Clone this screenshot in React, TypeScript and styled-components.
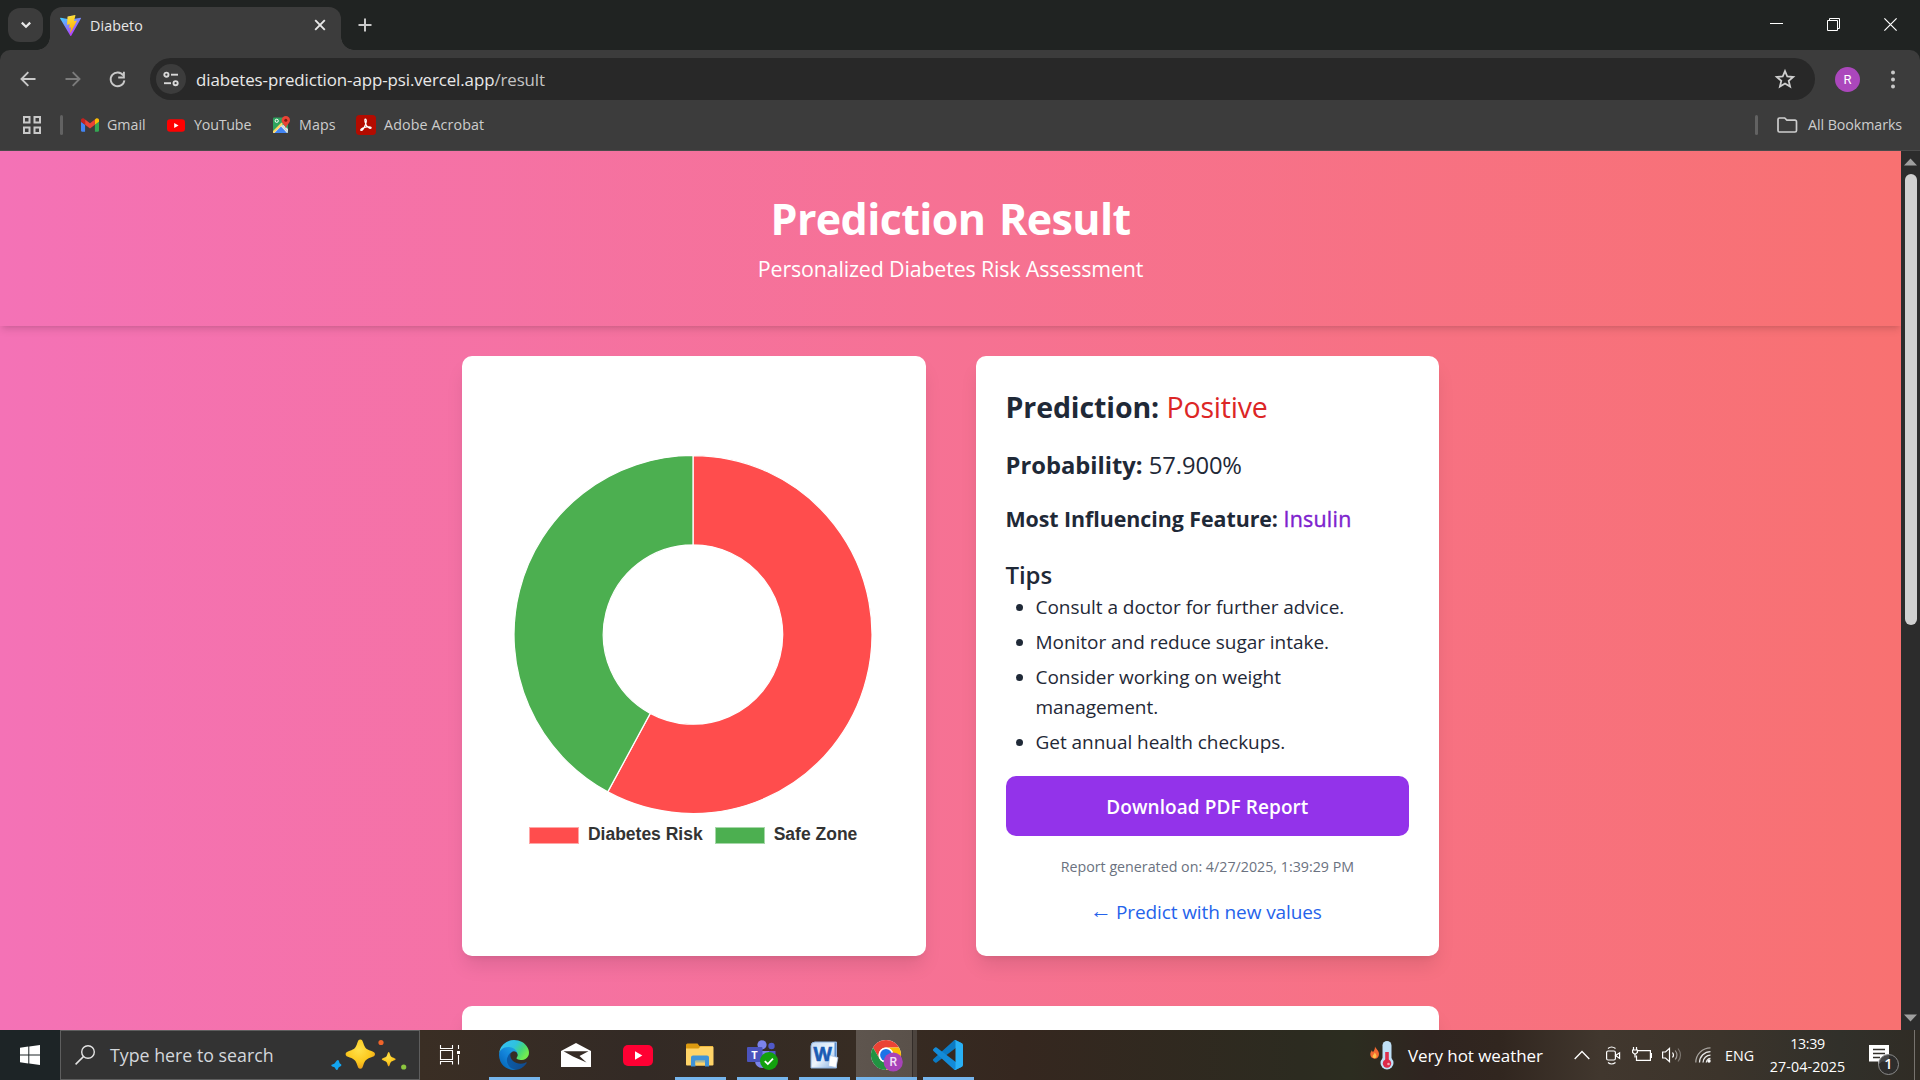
import React from 'react';
import styled, { createGlobalStyle, css } from 'styled-components';

const GlobalStyle = createGlobalStyle`
  *, *::before, *::after { box-sizing: border-box; }
  body { margin: 0; overflow: hidden; background: #202322; }
  svg { display: block; flex: none; overflow: visible; }
`;

const uiFont = css`
  font-family: 'Open Sans', 'Noto Sans', sans-serif;
  font-variant-ligatures: none;
  white-space: nowrap;
`;

const Screen = styled.div`
  ${uiFont}
  width: 1920px;
  height: 1080px;
  display: grid;
  grid-template-rows: 50px 101px 879px 50px;
  overflow: hidden;
`;

/* ---------- Browser tab strip ---------- */

const TabStrip = styled.header`
  display: flex;
  align-items: flex-end;
  background: #202322;
  padding-left: 8px;
`;

const TabSearch = styled.button`
  width: 35px;
  height: 34px;
  margin: 0 0 8px;
  padding: 0;
  border: 0;
  border-radius: 12px;
  background: #3c3c3c;
  display: grid;
  place-items: center;
`;

const Tab = styled.div`
  width: 291px;
  height: 43px;
  margin-left: 7px;
  padding: 0 15px 7px 10px;
  border-radius: 12px 12px 0 0;
  background: #3c3c3c;
  display: flex;
  align-items: center;
  gap: 9px;
  color: #e8e8e8;
  font-size: 14.25px;
  letter-spacing: 0.1px;
  position: relative;

  &::before,
  &::after {
    content: '';
    position: absolute;
    bottom: 0;
    width: 13px;
    height: 13px;
  }
  &::before {
    left: -13px;
    background: radial-gradient(circle at 0 0, transparent 12.5px, #3c3c3c 13px);
  }
  &::after {
    right: -13px;
    background: radial-gradient(circle at 100% 0, transparent 12.5px, #3c3c3c 13px);
  }
`;

const TabTitle = styled.span`
  flex: 1;
  padding-top: 1px;
`;

const NewTab = styled.div`
  width: 48px;
  height: 43px;
  padding-bottom: 7px;
  display: grid;
  place-items: center;
`;

const WindowControls = styled.div`
  margin-left: auto;
  height: 50px;
  display: flex;
`;

const WindowControl = styled.div`
  width: 57px;
  height: 49px;
  padding-right: 2px;
  display: grid;
  place-items: center;
`;

/* ---------- Toolbar and bookmarks ---------- */

const BrowserBars = styled.div`
  background: #202322;
`;

const BarsSurface = styled.div`
  height: 101px;
  background: #3c3c3c;
  border-radius: 10px 10px 0 0;
  border-bottom: 1px solid #4b4b4b;
`;

const Toolbar = styled.div`
  height: 58px;
  padding-left: 5px;
  display: flex;
  align-items: center;
`;

const NavButton = styled.div`
  width: 45px;
  height: 45px;
  display: grid;
  place-items: center;
`;

const Omnibox = styled.div`
  width: 1665px;
  height: 42px;
  margin-left: 10px;
  padding: 0 20px 0 6px;
  border-radius: 21px;
  background: #282828;
  display: flex;
  align-items: center;
  color: #e9e9e9;
  font-size: 16.9px;
  letter-spacing: -0.1px;
`;

const SiteInfo = styled.span`
  width: 30px;
  height: 30px;
  margin-right: 10px;
  border-radius: 50%;
  background: #3c3c3c;
  display: grid;
  place-items: center;
`;

const UrlText = styled.span`
  flex: 1;
  padding-top: 1px;
`;

const UrlPath = styled.span`
  color: #c4c4c4;
`;

const Avatar = styled.span`
  width: 25px;
  height: 25px;
  margin-left: 20px;
  border-radius: 50%;
  background: #ab47bc;
  color: #fff;
  display: grid;
  place-items: center;
  font: 400 13px/1 Roboto, sans-serif;
`;

const MenuDots = styled.span`
  margin-left: 31px;
`;

const BookmarksBar = styled.div`
  height: 34px;
  padding: 0 18px 0 23px;
  display: flex;
  align-items: center;
  color: #cdcdcd;
  font-size: 14.25px;
`;

const BookmarkLabel = styled.span`
  padding-bottom: 2px;
`;

const BarDivider = styled.i<{ $left: number; $right: number }>`
  width: 3px;
  height: 20px;
  border-radius: 2px;
  background: #626262;
  margin: 0 ${p => p.$right}px 0 ${p => p.$left}px;
`;

const Bookmark = styled.span<{ $width: number; $spacing?: number; $gap?: number }>`
  width: ${p => p.$width}px;
  display: flex;
  align-items: center;
  gap: ${p => p.$gap ?? 8}px;
  letter-spacing: ${p => p.$spacing ?? 0}px;
`;

const AllBookmarks = styled.span`
  margin-left: auto;
  display: flex;
  align-items: center;
  letter-spacing: -0.08px;
`;

/* ---------- Page ---------- */

const Viewport = styled.div`
  display: grid;
  grid-template-columns: 1901px 19px;
  overflow: hidden;
`;

const Page = styled.main`
  background: linear-gradient(to right, #f472b6, #f87171);
  overflow: hidden;
`;

const Hero = styled.section`
  height: 175px;
  padding-top: 40px;
  color: #fff;
  text-align: center;
  background: linear-gradient(to right, #f472b6, #f87171);
  box-shadow: 0 5px 7.5px -1.25px rgba(0, 0, 0, 0.1), 0 2.5px 5px -2.5px rgba(0, 0, 0, 0.1);
`;

const HeroTitle = styled.h1`
  margin: 0;
  font-size: 43px;
  font-weight: 700;
  line-height: 56px;
  letter-spacing: -0.62px;
  word-spacing: 3px;
`;

const HeroSubtitle = styled.p`
  margin: 4px 0 0;
  font-size: 21.4px;
  line-height: 35px;
  letter-spacing: -0.15px;
`;

const Content = styled.div`
  width: 977.5px;
  margin: 30px auto 0;
  display: grid;
  grid-template-columns: 1fr 1fr;
  gap: 50px;
`;

const Card = styled.section`
  height: 600px;
  padding: 30px;
  border-radius: 10px;
  background: #fff;
  box-shadow: 0 12.5px 18.75px -3.75px rgba(0, 0, 0, 0.1), 0 5px 7.5px -5px rgba(0, 0, 0, 0.1);
`;

const ChartCard = styled(Card)`
  display: flex;
  flex-direction: column;
  align-items: center;
  padding: 99px 31px 0 30px;
`;

const WideCard = styled(Card)`
  grid-column: 1 / -1;
`;

const Legend = styled.div`
  margin-top: 6px;
  display: flex;
  align-items: center;
  gap: 12px;
  font: 700 17.5px/27px 'Liberation Sans', Arial, sans-serif;
  color: #333;
`;

const LegendItem = styled.span`
  display: flex;
  align-items: center;
  gap: 9px;
`;

const LegendSwatch = styled.i<{ $color: string }>`
  width: 50px;
  height: 17px;
  margin-top: 1px;
  background: ${p => p.$color};
  border: 1px solid rgba(255, 255, 255, 0.5);
`;

const ResultCard = styled(Card)`
  color: #1f2937;
`;

const Fact = styled.p<{ $size: number; $line: number; $after: number; $spacing?: number }>`
  margin: 0 0 ${p => p.$after}px;
  font-size: ${p => p.$size}px;
  line-height: ${p => p.$line}px;
  letter-spacing: ${p => p.$spacing ?? 0}px;
`;

const Value = styled.span<{ $color?: string; $spacing?: number; $stroke?: number }>`
  color: ${p => p.$color ?? 'inherit'};
  letter-spacing: ${p => p.$spacing ?? 0}px;
  -webkit-text-stroke: ${p => p.$stroke ?? 0}px currentColor;
`;

const TipsTitle = styled.h2`
  margin: 0;
  font-size: 24px;
  line-height: 37px;
  font-weight: 600;
  letter-spacing: -0.1px;
`;

const TipList = styled.ul`
  margin: -1px 0 0;
  padding: 0 20px 0 30px;
  list-style: disc;
  font-size: 19px;
  line-height: 30px;
  letter-spacing: -0.04px;
  white-space: normal;
`;

const Tip = styled.li`
  & + & {
    margin-top: 5px;
  }
`;

const DownloadButton = styled.button`
  ${uiFont}
  display: block;
  width: 100%;
  height: 60px;
  margin: 19px 0 0;
  padding: 2px 0 0;
  border: 0;
  border-radius: 10px;
  background: #9333ea;
  color: #fff;
  font-size: 19px;
  font-weight: 600;
  letter-spacing: 0.08px;
`;

const Stamp = styled.p`
  margin: 20px 0 0;
  text-align: center;
  color: #6b7280;
  font-size: 14.25px;
  line-height: 21px;
`;

const BackLink = styled.a`
  margin-top: 19px;
  display: flex;
  justify-content: center;
  gap: 4px;
  color: #2563eb;
  font-size: 19px;
  line-height: 32px;
  letter-spacing: -0.1px;
`;

const Arrow = styled.span`
  font: 22px/30px 'Liberation Sans', sans-serif;
  margin-left: -3px;
`;

const Scrollbar = styled.div`
  background: #2c2c2c;
  display: flex;
  flex-direction: column;
  align-items: center;
  padding: 7px 0 8px;
`;

const Thumb = styled.div`
  width: 12px;
  height: 451px;
  margin: 8px 0 auto;
  border-radius: 6px;
  background: #d0d0d0;
`;

/* ---------- Taskbar ---------- */

const Taskbar = styled.footer`
  display: flex;
  color: #fff;
  background: linear-gradient(
    to right,
    #1d2426 0, #1d2426 60px, #3a2e24 420px, #332a25 640px, #372c23 860px, #35271f 1020px,
    #2c2b20 1300px, #2c2d20 1350px, #2f2420 1430px, #31261f 1500px, #41372e 1600px,
    #3c342b 1720px, #31302a 1840px, #302c25 1920px
  );
`;

const StartButton = styled.div`
  width: 60px;
  display: grid;
  place-items: center;
`;

const SearchBox = styled.div`
  width: 360px;
  padding: 0 13px 0 14px;
  border: 1px solid #5e5e5e;
  background: #333;
  display: flex;
  align-items: center;
  color: #d3d7dc;
  font-size: 17.8px;
`;

const SearchLabel = styled.span`
  flex: 1;
  padding-left: 15px;
`;

const TaskCell = styled.div<{ $active?: boolean; $first?: boolean }>`
  width: 62px;
  margin-right: ${p => (p.$first ? 1 : 0)}px;
  display: flex;
  flex-direction: column;
  align-items: center;
  background: ${p =>
    p.$active
      ? 'linear-gradient(to right, transparent 1px, #5e554e 1px, #5a514a 57px, #332c28 57px, #332c28 58px, #4c443e 58px)'
      : 'none'};
`;

const TaskIcon = styled.div`
  width: 34px;
  flex: 1;
  margin-top: 3px;
  display: grid;
  place-items: center;
`;

const RunningMark = styled.i<{ $state?: 'open' | 'active' }>`
  height: 3px;
  width: ${p => (p.$state === 'active' ? 61 : 51)}px;
  background: ${p => (p.$state ? '#76b5ec' : 'transparent')};
`;

const Weather = styled.div`
  width: 204px;
  margin-left: auto;
  display: flex;
  align-items: center;
  gap: 13px;
  font-size: 17px;
  letter-spacing: -0.06px;
`;

const Tray = styled.div`
  display: flex;
  align-items: center;
`;

const TrayIcon = styled.span<{ $width: number }>`
  width: ${p => p.$width}px;
  display: flex;
`;

const Language = styled.span`
  width: 44px;
  margin-left: -1px;
  font-size: 14.25px;
`;

const Clock = styled.div`
  width: 77px;
  text-align: center;
  font-size: 14.25px;
  line-height: 23px;
`;

const ClockTime = styled.div`
  letter-spacing: -0.35px;
`;

const ClockDate = styled.div`
  letter-spacing: 0.1px;
`;

const Notifications = styled.div`
  width: 51px;
  height: 50px;
  margin-left: 18px;
  padding: 15px 0 0 5px;
  border-right: 1px solid #77736e;
  position: relative;
`;

const NotificationCount = styled.span`
  position: absolute;
  left: 14px;
  top: 24px;
  width: 21px;
  height: 21px;
  border: 1px solid #8b8b8b;
  border-radius: 50%;
  background: rgba(45, 45, 45, 0.88);
  font-size: 14.5px;
  font-weight: 600;
  line-height: 18px;
  text-align: center;
`;

/* ---------- Icons ---------- */

const ViteLogo = () => (
  <svg width="21" height="21" viewBox="0 0 32 32">
    <defs>
      <linearGradient id="va" x1="0" y1="0" x2="0.6" y2="1">
        <stop stopColor="#41d1ff" />
        <stop offset="1" stopColor="#bd34fe" />
      </linearGradient>
      <linearGradient id="vb" x1="0.4" y1="0" x2="0.6" y2="1">
        <stop stopColor="#ffea83" />
        <stop offset="0.1" stopColor="#ffdd35" />
        <stop offset="1" stopColor="#ffa800" />
      </linearGradient>
    </defs>
    <path fill="url(#va)" d="M31.9 5.5 17.1 31.6a.8.8 0 0 1-1.4 0L.2 5.5a.8.8 0 0 1 .9-1.2l15 2.7h.3l14.8-2.7a.8.8 0 0 1 .7 1.2Z" />
    <path fill="url(#vb)" d="M23 .1 11.800 2.300a.4.4 0 0 0-.35.4l-.7 11.700a.4.4 0 0 0 .5.4l3.100-.7a.4.4 0 0 1 .5.5l-.9 4.500a.4.4 0 0 0 .5.5l1.900-.6a.4.4 0 0 1 .5.5l-1.500 7.100c-.1.4.5.700.8.300l9.500-17.800a.4.4 0 0 0-.5-.6l-3.200.6a.4.4 0 0 1-.5-.5L23.500.6A.4.4 0 0 0 23 .1Z" />
  </svg>
);

const GmailLogo = () => (
  <svg width="18" height="14" viewBox="52 42 88 66">
    <path fill="#4285f4" d="M58 108h14V74L52 59v43c0 3.320 2.690 6 6 6" />
    <path fill="#34a853" d="M120 108h14c3.320 0 6-2.690 6-6V59l-20 15" />
    <path fill="#fbbc04" d="M120 48v26l20-15v-8c0-7.420-8.470-11.650-14.400-7.200" />
    <path fill="#ea4335" d="M72 74V48l24 18 24-18v26L96 92" />
    <path fill="#c5221f" d="M52 51v8l20 15V48l-5.600-4.200c-5.940-4.450-14.400-.22-14.400 7.200" />
  </svg>
);

const YouTubeLogo = ({ width, height, color }: { width: number; height: number; color: string }) => (
  <svg width={width} height={height} viewBox="0 0 30 21">
    <rect width="30" height="21" rx="5" fill={color} />
    <path d="M12 6.300v8.400l7.300-4.200Z" fill="#fff" />
  </svg>
);

const MapsLogo = () => (
  <svg width="18" height="18" viewBox="0 0 18 18">
    <rect x="0" y="1.500" width="15" height="15.500" rx="1" fill="#2da45e" />
    <path d="M0 16 8 8l7 8.500-1 .5H1Z" fill="#e8e8e8" />
    <path d="M1.500 17 8 10.500 14 17Z" fill="#4285f4" />
    <path d="M0 15 8.500 6.500 10 8 1 17H0Z" fill="#fdd663" />
    <path d="M10 8.500 15 13v3.500L9 9.500Z" fill="#dfe3e8" />
    <circle cx="3.700" cy="4.800" r="1.600" fill="none" stroke="#fff" strokeWidth="1" />
    <path d="M12.800 0a4.200 4.200 0 0 1 4.200 4.200c0 3-3.400 4.300-4.200 8-.8-3.700-4.200-5-4.200-8A4.200 4.200 0 0 1 12.800 0Z" fill="#ea4335" />
    <circle cx="12.800" cy="4.200" r="1.500" fill="#7d1a12" />
  </svg>
);

const AcrobatLogo = () => (
  <svg width="20" height="20" viewBox="0 0 20 20">
    <rect width="20" height="20" rx="3.500" fill="#b30b00" />
    <path d="M9.300 4.200c1.600-.2 1 3.200.2 5.300-.8 2-2.500 5.800-4.200 6-1.700-.2.500-2.600 4.300-3.400 2.500-.6 5.600-.5 5.600.7-.1 1.100-2.800.2-4.300-1.700C9.400 9.300 8.200 4.500 9.300 4.200Z" fill="none" stroke="#fff" strokeWidth="1.200" />
  </svg>
);

const EdgeLogo = () => (
  <svg width="30" height="30" viewBox="0 0 256 256">
    <defs>
      <linearGradient id="ea" x1="0.2" y1="0.5" x2="1" y2="0.6">
        <stop stopColor="#0c59a4" />
        <stop offset="1" stopColor="#114a8b" />
      </linearGradient>
      <linearGradient id="eb" x1="0.8" y1="0.2" x2="0.2" y2="0.9">
        <stop stopColor="#1b9de2" />
        <stop offset="0.5" stopColor="#1281d8" />
        <stop offset="1" stopColor="#0668b8" />
      </linearGradient>
      <linearGradient id="ec" x1="0.05" y1="0.2" x2="0.95" y2="0.65">
        <stop stopColor="#35c1f1" />
        <stop offset="0.45" stopColor="#2fc2df" />
        <stop offset="0.75" stopColor="#43d77a" />
        <stop offset="1" stopColor="#72ea50" />
      </linearGradient>
    </defs>
    <path fill="url(#ea)" d="M231 190.500c-3.400 1.800-6.900 3.400-10.500 4.700a101.900 101.900 0 0 1-35.900 6.500c-47.300 0-88.500-32.500-88.500-74.300a31.500 31.500 0 0 1 16.400-27.300c-42.800 1.800-53.800 46.400-53.800 72.500 0 74 68.100 81.400 82.800 81.400 7.900 0 19.800-2.300 27-4.600l1.300-.4a128.300 128.300 0 0 0 66.600-52.800 4 4 0 0 0-5.400-5.700Z" />
    <path fill="url(#eb)" d="M105.700 241.400a79.200 79.200 0 0 1-22.700-21.300 80.700 80.700 0 0 1 29.500-120c3.200-1.500 8.500-4.100 15.600-4a32.400 32.400 0 0 1 25.700 13 31.900 31.900 0 0 1 6.300 18.700c0-.2 24.500-79.600-80-79.600-43.900 0-80 41.700-80 78.200a130.200 130.200 0 0 0 12.100 56 128 128 0 0 0 156.400 67.100 75.500 75.500 0 0 1-62.800-8Z" />
    <path fill="url(#ec)" d="M152.300 148.900c-.9 1-3.400 2.500-3.400 5.600 0 2.600 1.700 5.200 4.800 7.300 14.300 10 41.400 8.600 41.500 8.600a59.600 59.600 0 0 0 30.300-8.300 61.400 61.400 0 0 0 30.400-52.900c.3-22.400-8-37.300-11.300-43.900C223.500 23.900 177.700 0 128 0A128 128 0 0 0 0 126.200c.5-36.500 36.800-66 80-66 3.500 0 23.500.3 42 10 16.300 8.600 24.900 18.900 30.800 29.200 6.200 10.700 7.300 24.100 7.300 29.500 0 5.300-2.700 13.300-7.800 20Z" />
  </svg>
);

const MailLogo = () => (
  <svg width="30" height="24" viewBox="0 0 30 24">
    <path fill="#fff" d="M0 8 15 0l15 8v16H0Z" />
    <path fill="#352b25" d="M2.500 8.200h25L18.500 13l7 6.500L12 13.500Z" />
  </svg>
);

const FolderLogo = () => (
  <svg width="28" height="24" viewBox="0 0 28 24">
    <path fill="#dc9a10" d="M0 2a1.500 1.500 0 0 1 1.500-1.500h10L13.500 3H27v5H0Z" />
    <path fill="#ffd468" d="M0 5.500h12.500l2-2H26.500a1 1 0 0 1 1 1V21.500a1 1 0 0 1-1 1h-25.500a1 1 0 0 1-1-1Z" />
    <path fill="#4094d8" d="M5 14.500a2 2 0 0 1 2-2h14a2 2 0 0 1 2 2V23.500h-4v-6h-9.500v6H5Z" />
    <path fill="#ffd468" d="M9.500 18h9.500v4.500H9.500Z" />
    <path fill="#4094d8" d="M9.500 17.500h9.500v2H9.500Z" opacity=".45" />
  </svg>
);

const TeamsMark = styled.text`
  font: 700 11px 'Open Sans', sans-serif;
  fill: #fff;
`;

const TeamsLogo = () => (
  <svg width="32" height="30" viewBox="0 0 32 30">
    <circle cx="25.500" cy="6" r="3.200" fill="#5059c9" />
    <circle cx="16" cy="4.800" r="4.600" fill="#7b83eb" />
    <path d="M20 11h9.500v8a5 5 0 0 1-9 2Z" fill="#5059c9" />
    <path d="M9 11h14v10a7 7 0 0 1-14 0Z" fill="#7b83eb" />
    <rect x="1" y="7" width="15.500" height="15" rx="1" fill="#4b53bc" />
    <TeamsMark x="5.300" y="18.500">T</TeamsMark>
    <circle cx="23" cy="21" r="9" fill="#13a10e" />
    <path d="m18.800 21.200 3 2.800 5.200-5.400" fill="none" stroke="#fff" strokeWidth="1.800" />
  </svg>
);

const WordMark = styled.text`
  font: 700 19px 'Open Sans', sans-serif;
  fill: #1a5cb4;
  stroke: #1a5cb4;
  stroke-width: 0.6px;
`;

const WordLogo = () => (
  <svg width="29" height="28" viewBox="0 0 29 28">
    <defs>
      <linearGradient id="wa" x1="0" y1="0" x2="1" y2="1">
        <stop stopColor="#c4dbf5" />
        <stop offset="0.5" stopColor="#eef5fd" />
        <stop offset="1" stopColor="#7da9df" />
      </linearGradient>
    </defs>
    <path d="M5 1h21.500v26H1V5a4 4 0 0 1 4-4Z" fill="url(#wa)" stroke="#8db1de" />
    <path d="M24.500 1.500H26V18h-1.500Z" fill="#5c8fd0" />
    <WordMark x="3.500" y="20">W</WordMark>
    <path d="m20 14.500 8 2-2 10-7.500-1.500Z" fill="#fff" stroke="#a9c2e2" strokeWidth=".7" />
  </svg>
);

const BadgeLetter = styled.text`
  font: 500 12px Roboto, sans-serif;
  fill: #f3e2f6;
  text-anchor: middle;
`;

const ChromeLogo = () => (
  <svg width="34" height="32" viewBox="0 -1 34 32">
    <circle cx="17" cy="15" r="15" fill="#fff" />
    <path d="M4 7.500A15 15 0 0 1 30 7.500H17a7.500 7.500 0 0 0-6.500 11.200Z" fill="#ea4335" />
    <path d="M30 7.500A15 15 0 0 1 17 30l6.500-11.300A7.500 7.500 0 0 0 17 7.500Z" fill="#fbbc04" />
    <path d="M17 30A15 15 0 0 1 4 7.500l6.500 11.200A7.500 7.500 0 0 0 23.500 18.700Z" fill="#229342" />
    <circle cx="17" cy="15" r="7.400" fill="#fff" />
    <circle cx="17" cy="15" r="5.900" fill="#1a73e8" />
    <circle cx="24.200" cy="22" r="9.600" fill="#a743b8" />
    <BadgeLetter x="24.200" y="26.300">R</BadgeLetter>
  </svg>
);

const VsCodeLogo = () => (
  <svg width="30" height="30" viewBox="0 0 100 100">
    <path fill="#0b7ac4" d="m96.500 10.800-20.600-9.900a6.200 6.200 0 0 0-7.100 1.200L1.300 63.600a4.200 4.200 0 0 0 0 6.200l5.500 5a4.200 4.200 0 0 0 5.400.2l81.200-61.600c2.700-2.100 6.600-.1 6.600 3.300v-.3a6.300 6.300 0 0 0-3.500-5.600Z" />
    <path fill="#138bd8" d="m96.500 89.200-20.600 9.900a6.200 6.200 0 0 1-7.100-1.200L1.300 36.400a4.200 4.200 0 0 1 0-6.200l5.500-5a4.200 4.200 0 0 1 5.400-.2l81.200 61.600c2.700 2.100 6.600.1 6.600-3.300v.3a6.300 6.300 0 0 1-3.500 5.600Z" />
    <path fill="#29b0f5" d="M75.900 99.100a6.200 6.200 0 0 1-7.100-1.200c2.300 2.300 6.200.7 6.200-2.600V4.700c0-3.300-3.900-4.900-6.200-2.600a6.200 6.200 0 0 1 7.100-1.200l20.600 9.900a6.300 6.300 0 0 1 3.500 5.600v67.200a6.300 6.300 0 0 1-3.500 5.600Z" />
  </svg>
);

const SparkleArt = () => (
  <svg width="76" height="36" viewBox="330 1037 76 36">
    <defs>
      <radialGradient id="sp" cx="0.45" cy="0.35" r="0.7">
        <stop stopColor="#ffe14a" />
        <stop offset="0.6" stopColor="#fcc81e" />
        <stop offset="1" stopColor="#e6951a" />
      </radialGradient>
    </defs>
    <path fill="url(#sp)" d="M360.300 1039.500c1.700 0 2.200 1 3 3.500 1.600 5 2.800 6.200 7.500 7.800 2.800 1 4.200 1.700 4.200 3.400s-1.400 2.300-4.200 3.300c-4.700 1.600-5.900 2.900-7.500 7.800-.8 2.500-1.300 3.500-3 3.500s-2.200-1-3-3.500c-1.600-4.900-2.800-6.200-7.500-7.800-2.800-1-4.200-1.600-4.200-3.300s1.400-2.400 4.200-3.400c4.700-1.600 5.900-2.800 7.500-7.800.8-2.500 1.300-3.500 3-3.500Z" />
    <path fill="url(#sp)" d="M388.700 1052c1 0 1.500 3.500 2.300 4.500s4.700 1.700 4.700 2.700-3.700 1.700-4.700 2.700-1.300 4.300-2.300 4.300-1.300-3.300-2.300-4.300-4.600-1.700-4.600-2.700 3.800-1.700 4.600-2.700 1.300-4.500 2.300-4.500Z" />
    <path fill="#13a5f0" d="M338 1060c1.200.3 1.200 2.600 1.700 3.300s1.900.9 1.700 2-2.200 1.500-2.800 2.200-.6 2.700-1.900 2.500-1.400-2-2-2.500-3.200-.7-3.400-1.900 2.200-1.300 2.900-1.800 2.600-4 3.800-3.800Z" />
    <circle cx="381" cy="1042.500" r="2.600" fill="#f0642a" />
    <circle cx="403.700" cy="1067" r="2.600" fill="#8cc63f" />
  </svg>
);

const Thermometer = () => (
  <svg width="25" height="30" viewBox="0 0 25 30">
    <rect x="12.500" y="1" width="9" height="22" rx="4.500" fill="#bfe0f7" />
    <circle cx="17" cy="23" r="6.500" fill="#bfe0f7" />
    <path d="M17 12v10" stroke="#e02f4c" strokeWidth="3.600" />
    <circle cx="17" cy="23.500" r="4.200" fill="#dd2a49" />
    <circle cx="18.500" cy="24" r="1.300" fill="#fff" opacity=".6" />
    <path d="M5 6.500c1 2.500 4 4 4 7.500 0 3-1.800 4.700-4.300 4.700S.3 17 .3 14.300c0-1.800 1-2.800 1.500-4 .6.700.8 1.200 1 2C4 11 5 9.300 5 6.500Z" fill="#f26a32" />
    <path d="M4.800 12.500c.6 1.200 1.700 2 1.700 3.500 0 1.300-.8 2.200-1.900 2.200s-2-.8-2-2 1.500-1.700 2.200-3.700Z" fill="#ffc04a" />
  </svg>
);

/* ---------- Doughnut chart ---------- */

const slices = [
  { label: 'Diabetes Risk', value: 57.9, color: '#ff4d4d' },
  { label: 'Safe Zone', value: 42.1, color: '#4caf50' },
];

const OUTER = 179;
const INNER = 89.7;

const polar = (r: number, share: number) => {
  const a = share * 2 * Math.PI;
  return `${180 + r * Math.sin(a)} ${179.5 - r * Math.cos(a)}`;
};

const ringPath = (from: number, to: number) => {
  const big = to - from > 0.5 ? 1 : 0;
  return `M${polar(OUTER, from)}A${OUTER} ${OUTER} 0 ${big} 1 ${polar(OUTER, to)}L${polar(INNER, to)}A${INNER} ${INNER} 0 ${big} 0 ${polar(INNER, from)}Z`;
};

const Doughnut = () => {
  let start = 0;
  return (
    <svg width="360" height="360" viewBox="0 0 360 360">
      {slices.map(s => {
        const from = start;
        start += s.value / 100;
        return <path key={s.label} d={ringPath(from, start)} fill={s.color} stroke="#fff" strokeWidth="1.250" />;
      })}
    </svg>
  );
};

const tips = [
  'Consult a doctor for further advice.',
  'Monitor and reduce sugar intake.',
  'Consider working on weight management.',
  'Get annual health checkups.',
];

const apps: { name: string; icon: React.ReactNode; state?: 'open' | 'active' }[] = [
  { name: 'edge', icon: <EdgeLogo />, state: 'open' },
  { name: 'mail', icon: <MailLogo /> },
  { name: 'youtube', icon: <YouTubeLogo width={30} height={21} color="#ff0033" /> },
  { name: 'files', icon: <FolderLogo />, state: 'open' },
  { name: 'teams', icon: <TeamsLogo />, state: 'open' },
  { name: 'word', icon: <WordLogo />, state: 'open' },
  { name: 'chrome', icon: <ChromeLogo />, state: 'active' },
  { name: 'code', icon: <VsCodeLogo />, state: 'open' },
];

export default function App() {
  return (
    <Screen>
      <GlobalStyle />

      <TabStrip>
        <TabSearch>
          <svg width="12" height="8" viewBox="0 0 12 8"><path d="m1.800 1.600 4.200 4.200 4.200-4.200" fill="none" stroke="#e8e8e8" strokeWidth="2.200" /></svg>
        </TabSearch>
        <Tab>
          <ViteLogo />
          <TabTitle>Diabeto</TabTitle>
          <svg width="12" height="12" viewBox="0 0 12 12"><path d="m1.200 1.200 9.600 9.600m0-9.600-9.600 9.600" stroke="#e8e8e8" strokeWidth="1.900" /></svg>
        </Tab>
        <NewTab>
          <svg width="14" height="14" viewBox="0 0 14 14"><path d="M7 .5v13M.5 7h13" stroke="#c9c9c9" strokeWidth="2" /></svg>
        </NewTab>
        <WindowControls>
          <WindowControl><svg width="13" height="13" viewBox="0 0 13 13"><path d="M0 5.500h13" stroke="#fff" /></svg></WindowControl>
          <WindowControl><svg width="13" height="13" viewBox="0 0 13 13"><path d="M.5 2.500h10v10H.5ZM2.500 2.500v-2h10v10h-2" fill="none" stroke="#fff" /></svg></WindowControl>
          <WindowControl><svg width="13" height="13" viewBox="0 0 13 13"><path d="m.4.4 12.200 12.200m0-12.200L.4 12.600" stroke="#fff" strokeWidth="1.200" /></svg></WindowControl>
        </WindowControls>
      </TabStrip>

      <BrowserBars>
        <BarsSurface>
          <Toolbar>
            <NavButton><svg width="16" height="16" viewBox="0 0 16 16"><path d="M15.500 8H1.700M8.300 1.200 1.500 8l6.800 6.800" fill="none" stroke="#c9c9c9" strokeWidth="1.900" /></svg></NavButton>
            <NavButton><svg width="16" height="16" viewBox="0 0 16 16"><path d="M.5 8h13.800M7.700 1.200 14.500 8l-6.800 6.800" fill="none" stroke="#7b7b7b" strokeWidth="1.900" /></svg></NavButton>
            <NavButton><svg width="17" height="17" viewBox="0 0 17 17"><path d="M14.300 4.500A6.900 6.900 0 1 0 15.400 9.300" fill="none" stroke="#c9c9c9" strokeWidth="1.900" /><path d="M14.900.8v5.700H9.200" fill="none" stroke="#c9c9c9" strokeWidth="1.900" /></svg></NavButton>
            <Omnibox>
              <SiteInfo>
                <svg width="16" height="16" viewBox="0 0 16 16"><g fill="none" stroke="#d8d8d8" strokeWidth="1.900"><circle cx="3.400" cy="3.700" r="2.100" /><path d="M8 3.700h7" /><circle cx="12.600" cy="12.200" r="2.100" /><path d="M1 12.200h7" /></g></svg>
              </SiteInfo>
              <UrlText>diabetes-prediction-app-psi.vercel.app<UrlPath>/result</UrlPath></UrlText>
              <svg width="20" height="20" viewBox="0 0 20 20"><path d="m10 2.100 2.300 5.400 5.900.5-4.500 3.900 1.400 5.700L10 14.500l-5.100 3.100 1.400-5.700L1.800 8l5.900-.5Z" fill="none" stroke="#cfcfcf" strokeWidth="1.800" /></svg>
            </Omnibox>
            <Avatar>R</Avatar>
            <MenuDots><svg width="4" height="19" viewBox="0 0 4 19"><g fill="#c9c9c9"><circle cx="2" cy="2.400" r="2" /><circle cx="2" cy="9.400" r="2" /><circle cx="2" cy="16.400" r="2" /></g></svg></MenuDots>
          </Toolbar>
          <BookmarksBar>
            <svg width="18" height="18" viewBox="0 0 18 18"><path d="M1 1h5.500v5.500H1ZM11.500 1H17v5.500h-5.500ZM1 11.500h5.500V17H1ZM11.500 11.500H17V17h-5.500Z" fill="none" stroke="#c9c9c9" strokeWidth="2" /></svg>
            <BarDivider $left={19} $right={18} />
            <Bookmark $width={86}><GmailLogo /><BookmarkLabel>Gmail</BookmarkLabel></Bookmark>
            <Bookmark $width={106} $gap={9} $spacing={-0.2}><YouTubeLogo width={18} height={13} color="#ff0000" /><BookmarkLabel>YouTube</BookmarkLabel></Bookmark>
            <Bookmark $width={83} $spacing={0.1}><MapsLogo /><BookmarkLabel>Maps</BookmarkLabel></Bookmark>
            <Bookmark $width={140} $spacing={0.12}><AcrobatLogo /><BookmarkLabel>Adobe Acrobat</BookmarkLabel></Bookmark>
            <AllBookmarks>
              <BarDivider $left={0} $right={19} />
              <svg width="31" height="16" viewBox="0 0 31 16"><path d="M1 2.500A1.500 1.500 0 0 1 2.500 1h5.200l2.200 2.200h8.100a1.500 1.500 0 0 1 1.500 1.500v8.800a1.500 1.500 0 0 1-1.500 1.500H2.500A1.500 1.500 0 0 1 1 13.500Z" fill="none" stroke="#cdcdcd" strokeWidth="1.700" /></svg>
              <BookmarkLabel>All Bookmarks</BookmarkLabel>
            </AllBookmarks>
          </BookmarksBar>
        </BarsSurface>
      </BrowserBars>

      <Viewport>
        <Page>
          <Hero>
            <HeroTitle>Prediction Result</HeroTitle>
            <HeroSubtitle>Personalized Diabetes Risk Assessment</HeroSubtitle>
          </Hero>
          <Content>
            <ChartCard>
              <Doughnut />
              <Legend>
                {slices.map(s => (
                  <LegendItem key={s.label}><LegendSwatch $color={s.color} />{s.label}</LegendItem>
                ))}
              </Legend>
            </ChartCard>
            <ResultCard>
              <Fact $size={28.5} $line={42} $after={18} $spacing={-0.09}>
                <b>Prediction:</b> <Value $color="#dc2626" $spacing={-0.19}>Positive</Value>
              </Fact>
              <Fact $size={23.75} $line={38} $after={17}>
                <b>Probability:</b> <Value $spacing={-0.1}>57.900%</Value>
              </Fact>
              <Fact $size={21.4} $line={36} $after={19} $spacing={-0.06}>
                <b>Most Influencing Feature:</b> <Value $color="#7e22ce" $stroke={0.4} $spacing={0.25}>Insulin</Value>
              </Fact>
              <TipsTitle>Tips</TipsTitle>
              <TipList>
                {tips.map(t => <Tip key={t}>{t}</Tip>)}
              </TipList>
              <DownloadButton>Download PDF Report</DownloadButton>
              <Stamp>Report generated on: 4/27/2025, 1:39:29 PM</Stamp>
              <BackLink><Arrow>←</Arrow>Predict with new values</BackLink>
            </ResultCard>
            <WideCard />
          </Content>
        </Page>
        <Scrollbar>
          <svg width="13" height="8" viewBox="0 0 13 8"><path d="M6.500.5 13 7.500H0Z" fill="#a0a0a0" /></svg>
          <Thumb />
          <svg width="13" height="8" viewBox="0 0 13 8"><path d="M0 .5h13l-6.500 7Z" fill="#a0a0a0" /></svg>
        </Scrollbar>
      </Viewport>

      <Taskbar>
        <StartButton>
          <svg width="20" height="20" viewBox="0 0 20 20"><path d="M0 2.800 8.300 1.600v7.900H0ZM9.300 1.500 20 0v9.500H9.300ZM0 10.500h8.300v7.900L0 17.200ZM9.300 10.500H20V20L9.300 18.500Z" fill="#fff" /></svg>
        </StartButton>
        <SearchBox>
          <svg width="20" height="20" viewBox="0 0 20 20"><circle cx="13" cy="7" r="6.300" fill="none" stroke="#e4e4e4" strokeWidth="1.400" /><path d="M8.400 11.600.6 19.400" stroke="#e4e4e4" strokeWidth="1.500" /></svg>
          <SearchLabel>Type here to search</SearchLabel>
          <SparkleArt />
        </SearchBox>
        <TaskCell $first>
          <TaskIcon><svg width="22" height="20" viewBox="0 0 22 20"><path d="M.5 0v3.500h12V0M.5 5.500h12v9H.5ZM.5 19.500v-3h12v3M18.500 0v4M18.500 10v9.500" fill="none" stroke="#fff" strokeWidth="1.100" /><path d="M17 6h3v3h-3Z" fill="#fff" /></svg></TaskIcon>
          <RunningMark />
        </TaskCell>
        {apps.map(a => (
          <TaskCell key={a.name} $active={a.state === 'active'}>
            <TaskIcon>{a.icon}</TaskIcon>
            <RunningMark $state={a.state} />
          </TaskCell>
        ))}
        <Weather><Thermometer />Very hot weather</Weather>
        <Tray>
          <TrayIcon $width={32}><svg width="16" height="10" viewBox="0 0 16 10"><path d="m.7 9 7.300-7.500L15.300 9" fill="none" stroke="#fff" strokeWidth="1.300" /></svg></TrayIcon>
          <TrayIcon $width={26}><svg width="15" height="19" viewBox="0 0 15 19"><g fill="none" stroke="#fff" strokeWidth="1.200"><rect x=".6" y="5" width="8.800" height="9" rx="1.500" /><path d="m9.600 9.500 4-2.700v5.600ZM2 2.500Q5.500-.5 9.500 2.500M2 16.500q3.500 3 7.500 0" /></g></svg></TrayIcon>
          <TrayIcon $width={30}><svg width="20" height="16" viewBox="0 0 20 16"><g fill="none" stroke="#fff" strokeWidth="1.200"><path d="M6 3.600h12.400v9.800H4.500V8.500M18.400 6.500h1v4h-1M1.500 0v3M4.500 0v3M.6 3h4.800v2.500L3 7.500.6 5.500ZM3 7.500v3" /></g></svg></TrayIcon>
          <TrayIcon $width={33}><svg width="21" height="16" viewBox="0 0 21 16"><g fill="none" strokeWidth="1.200"><path d="M.6 5h2.900l4-3.700v13.400L3.500 11H.6Z" stroke="#fff" /><path d="M10.500 5.500q2 2.500 0 5" stroke="#fff" /><path d="M13.200 3.500q3.500 4.500 0 9" stroke="#a09b96" /><path d="M16 1.500q5 6.500 0 13" stroke="#7c766f" /></g></svg></TrayIcon>
          <TrayIcon $width={31}><svg width="16" height="16" viewBox="0 0 16 16"><g fill="none" stroke="#e8e8e8" strokeWidth="1.300"><path d="M.8 15.500A14.800 14.800 0 0 1 15.500.8" stroke="#a8a49f" /><path d="M4.500 15.500A11 11 0 0 1 15.500 4.600M8 15.500a7.500 7.500 0 0 1 7.500-7.300M11.300 15.500a4.200 4.200 0 0 1 4.200-4" /></g><circle cx="14" cy="14" r="1.700" fill="#fff" /></svg></TrayIcon>
          <Language>ENG</Language>
          <Clock>
            <ClockTime>13:39</ClockTime>
            <ClockDate>27-04-2025</ClockDate>
          </Clock>
          <Notifications>
            <svg width="20" height="20" viewBox="0 0 20 20"><path d="M0 0h20v16.500h-7L9 20v-3.500H0Z" fill="#fff" /><path d="M4 4.500h12M4 8.500h12M4 12.500h7" stroke="#33302b" strokeWidth="1.300" /></svg>
            <NotificationCount>1</NotificationCount>
          </Notifications>
          <TrayIcon $width={5} />
        </Tray>
      </Taskbar>
    </Screen>
  );
}
